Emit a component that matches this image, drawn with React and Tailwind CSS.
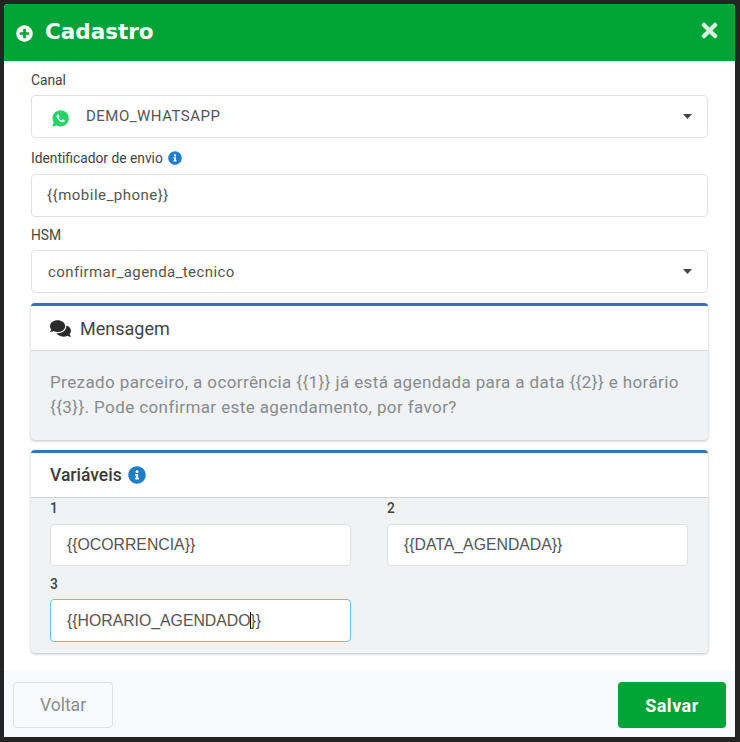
import { FaPlusCircle, FaTimes, FaComments, FaInfoCircle } from 'react-icons/fa';
import { IoLogoWhatsapp } from 'react-icons/io';

function Caret() {
  return (
    <svg width="9" height="5" viewBox="0 0 9 5" className="shrink-0">
      <path d="M0 0h9L4.5 5z" fill="#444" />
    </svg>
  );
}

function Field({ children, className = '' }) {
  return (
    <div className={`flex items-center bg-white border border-[#dfe1e3] rounded text-[#555] ${className}`}>
      {children}
    </div>
  );
}

const bodyText = 'text-[15px] tracking-[0.5px]';
const varText = "font-['Liberation_Sans',sans-serif] text-[15.8px]";

export default function App() {
  return (
    <div className="w-[740px] h-[742px] bg-[#242424] pt-1 pl-1 overflow-hidden font-['Roboto',sans-serif]">
      <div className="w-[731px] h-[733px] flex flex-col bg-white rounded-t overflow-hidden">
        {/* header */}
        <div className="h-[57px] shrink-0 flex items-center justify-between bg-[#00a335] pl-[12px] pr-[14px] text-white">
          <div className="flex items-center gap-[12px]">
            <FaPlusCircle className="text-[17px] mt-[1px]" />
            <span className="font-['DejaVu_Sans',sans-serif] text-[21.5px] font-bold">Cadastro</span>
          </div>
          <FaTimes className="text-[23px] text-[#d8f2e0] -mt-[5px]" />
        </div>

        {/* form */}
        <div className="flex-1 px-[27px]">
          <label className="block text-[13.8px] leading-[16px] text-[#444] mt-[11px] mb-[7px]">Canal</label>
          <Field className={`h-[43px] pl-[19px] pr-[15px] ${bodyText}`}>
            <IoLogoWhatsapp className="text-[19px] text-[#25d366] mt-[3px]" />
            <span className="ml-[16px] flex-1">DEMO_WHATSAPP</span>
            <Caret />
          </Field>

          <label className="flex items-center gap-[5px] text-[13.8px] leading-[16px] text-[#444] mt-[12px] mb-[8px]">
            Identificador de envio
            <FaInfoCircle className="text-[14px] text-[#1e7ecb]" />
          </label>
          <Field className={`h-[43px] pl-[15px] ${bodyText}`}>{'{{mobile_phone}}'}</Field>

          <label className="block text-[13.8px] leading-[16px] text-[#444] mt-[10px] mb-[7px]">HSM</label>
          <Field className="h-[43px] pl-[16px] pr-[15px] text-[15px] tracking-[0.4px]">
            <span className="flex-1 mt-[1px]">confirmar_agenda_tecnico</span>
            <Caret />
          </Field>

          {/* mensagem */}
          <div className="mt-[10px] h-[137px] rounded border-t-[3px] border-[#3a6fb5] bg-[#f1f2f4] shadow-[0_1px_3px_rgba(0,0,0,0.25)] overflow-hidden">
            <div className="h-[45px] flex items-center bg-white border-b border-[#d8dadc] pl-[19px] text-[#444]">
              <FaComments className="text-[21px] text-[#2b2b2b]" />
              <span className="ml-[9px] text-[18px]">Mensagem</span>
            </div>
            <p className="px-[19px] pt-[19px] text-[17px] tracking-[0.4px] leading-[25px] text-[#868b90]">
              Prezado parceiro, a ocorrência {'{{1}}'} já está agendada para a data {'{{2}}'} e horário {'{{3}}'}. Pode confirmar este agendamento, por favor?
            </p>
          </div>

          {/* variaveis */}
          <div className="mt-[10px] h-[203px] rounded border-t-[3px] border-[#3a6fb5] bg-[#f1f2f4] shadow-[0_1px_3px_rgba(0,0,0,0.25)] overflow-hidden">
            <div className="h-[45px] flex items-center gap-[6px] bg-white border-b border-[#d0d2d4] pl-[19px]">
              <span className="text-[17.5px] font-medium text-[#3a3a3a]">Variáveis</span>
              <FaInfoCircle className="text-[18px] text-[#1e7ecb]" />
            </div>
            <div className="grid grid-cols-2 gap-x-[36px] pl-[19px] pr-[20px]">
              <div>
                <div className="text-[13.8px] leading-[16px] font-medium text-[#444] mt-[2px] mb-[8px]">1</div>
                <Field className={`h-[42px] pl-[16px] ${varText}`}>{'{{OCORRENCIA}}'}</Field>
              </div>
              <div>
                <div className="text-[13.8px] leading-[16px] font-medium text-[#444] mt-[2px] mb-[8px]">2</div>
                <Field className={`h-[42px] pl-[16px] ${varText}`}>{'{{DATA_AGENDADA}}'}</Field>
              </div>
              <div>
                <div className="text-[13.8px] leading-[16px] font-medium text-[#444] mt-[10px] mb-[7px]">3</div>
                <Field className={`h-[43px] pl-[16px] !border-[#7fb9e6] ${varText}`}>
                  <span>{'{{HORARIO_AGENDADO'}</span>
                  <span className="h-[17px] border-l border-black" />
                  <span className="-ml-px">{'}}'}</span>
                </Field>
              </div>
            </div>
          </div>
        </div>

        {/* footer */}
        <div className="h-[66px] shrink-0 flex items-start justify-between bg-[#f8f9fb] pt-[11px] pl-[9px] pr-[9px]">
          <button className="w-[100px] h-[46px] rounded border border-[#dfe1e3] text-[17.5px] text-[#8a8d90]">Voltar</button>
          <button className="w-[108px] h-[46px] rounded bg-[#00a335] text-[18px] tracking-[0.5px] font-bold text-white">Salvar</button>
        </div>
      </div>
    </div>
  );
}
